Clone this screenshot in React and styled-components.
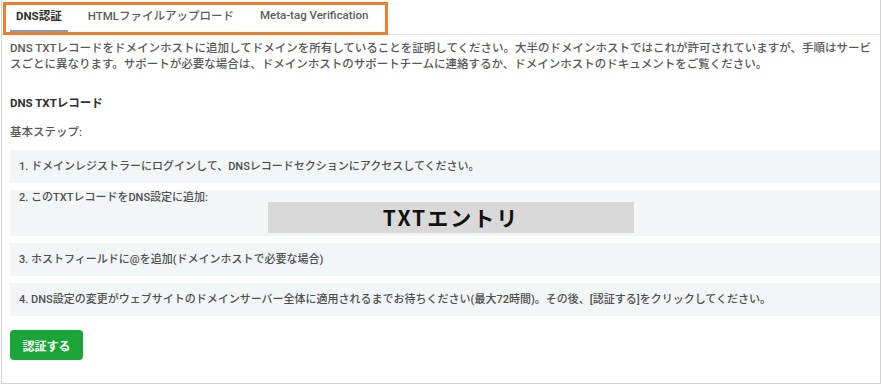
import React from 'react'
import styled, { createGlobalStyle } from 'styled-components'

const GlobalStyle = createGlobalStyle`
  body {
    margin: 0;
    background: #ffffff;
    font-family: Roboto, "Noto Sans CJK JP", sans-serif;
  }
`

const Page = styled.div`
  position: relative;
  width: 882px;
  height: 385px;
  padding: 0 1px 1px 1px;
  box-sizing: border-box;
`

const Frame = styled.div`
  height: 100%;
  box-sizing: border-box;
  border: 1px solid #d4d4d4;
  border-top: none;
`

const TabBar = styled.div`
  display: flex;
  gap: 14px;
  height: 35px;
  padding-left: 8px;
  border-bottom: 1px solid #e8e8e8;
  box-sizing: border-box;
`

const Tab = styled.div`
  display: flex;
  align-items: center;
  height: 32px;
  padding: 0 6px;
  box-sizing: border-box;
  font-size: 11.5px;
  font-weight: ${p => (p.$active ? 700 : 500)};
  color: ${p => (p.$active ? '#2f2f2f' : '#5c5c5c')};
  border-bottom: 2px solid ${p => (p.$active ? '#8a9bb8' : 'transparent')};
`

const Highlight = styled.div`
  position: absolute;
  left: 3px;
  top: 2px;
  width: 385px;
  height: 33px;
  box-sizing: border-box;
  border: 3px solid #ed7d31;
  pointer-events: none;
`

const Body = styled.div`
  padding: 5px 0 0 8px;
`

const Intro = styled.p`
  margin: 0;
  padding-right: 6px;
  font-size: 11.5px;
  line-height: 16px;
  font-weight: 500;
  color: #585858;
`

const Heading = styled.h4`
  margin: 23px 0 0;
  font-size: 11.5px;
  line-height: 16px;
  font-weight: 700;
  color: #2f2f2f;
`

const Label = styled.div`
  margin-top: 13px;
  font-size: 11.5px;
  line-height: 16px;
  font-weight: 500;
  color: #585858;
`

const Steps = styled.div`
  display: flex;
  flex-direction: column;
  gap: 7px;
  margin-top: 10px;
`

const Step = styled.div`
  display: flex;
  min-height: 33px;
  padding: ${p => (p.$top ? '0 9px 3px' : '0 9px')};
  align-items: ${p => (p.$top ? 'flex-start' : 'center')};
  box-sizing: border-box;
  background: #f3f6f7;
  font-size: 11px;
  line-height: 13px;
  font-weight: 500;
  color: #4f4f4f;
`

const StepText = styled.span`
  width: ${p => (p.$width ? `${p.$width}px` : 'auto')};
  padding-top: ${p => (p.$top ? '1px' : '0')};
  flex-shrink: 0;
`

const EntryBox = styled.div`
  width: 366px;
  height: 31px;
  margin-top: 12px;
  display: flex;
  align-items: center;
  justify-content: center;
  background: #d9d9d9;
  font-family: "Noto Sans CJK JP", sans-serif;
  font-size: 21px;
  font-weight: 700;
  letter-spacing: 2px;
  color: #111111;
`

const VerifyButton = styled.button`
  margin-top: 14px;
  width: 73px;
  height: 30px;
  border: none;
  border-radius: 4px;
  background: #1aa536;
  color: #ffffff;
  font-family: "Noto Sans CJK JP", sans-serif;
  font-size: 12px;
  font-weight: 700;
  cursor: pointer;
`

const App = () => {
  return (
    <Page>
      <GlobalStyle />
      <Frame>
        <TabBar>
          <Tab $active>DNS認証</Tab>
          <Tab>HTMLファイルアップロード</Tab>
          <Tab>Meta-tag Verification</Tab>
        </TabBar>
        <Body>
          <Intro>
            DNS TXTレコードをドメインホストに追加してドメインを所有していることを証明してください。大半のドメインホストではこれが許可されていますが、手順はサービスごとに異なります。サポートが必要な場合は、ドメインホストのサポートチームに連絡するか、ドメインホストのドキュメントをご覧ください。
          </Intro>
          <Heading>DNS TXTレコード</Heading>
          <Label>基本ステップ:</Label>
          <Steps>
            <Step>
              <StepText>1. ドメインレジストラーにログインして、DNSレコードセクションにアクセスしてください。</StepText>
            </Step>
            <Step $top>
              <StepText $width={249} $top>2. このTXTレコードをDNS設定に追加:</StepText>
              <EntryBox>TXTエントリ</EntryBox>
            </Step>
            <Step>
              <StepText>3. ホストフィールドに@を追加(ドメインホストで必要な場合)</StepText>
            </Step>
            <Step>
              <StepText>4. DNS設定の変更がウェブサイトのドメインサーバー全体に適用されるまでお待ちください(最大72時間)。その後、[認証する]をクリックしてください。</StepText>
            </Step>
          </Steps>
          <VerifyButton>認証する</VerifyButton>
        </Body>
      </Frame>
      <Highlight />
    </Page>
  )
}

export default App
